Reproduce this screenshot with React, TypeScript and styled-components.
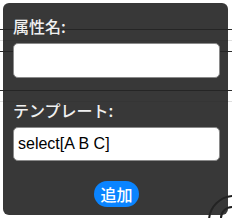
import styled, { createGlobalStyle } from "styled-components";

const GlobalStyle = createGlobalStyle`
  html, body {
    margin: 0;
    padding: 0;
    background: #ffffff;
  }
  * {
    box-sizing: border-box;
  }
`;

const Stage = styled.div`
  position: relative;
  width: 232px;
  height: 218px;
  overflow: hidden;
  background: #ffffff;
`;

const Backdrop = styled.div`
  display: flex;
  flex-direction: column;
`;

const Rule = styled.div<{ $gap: number; $tone: "dark" | "light" }>`
  margin-top: ${(p) => p.$gap}px;
  height: 1px;
  background: ${(p) => (p.$tone === "dark" ? "#2e2e2e" : "#dedede")};
`;

const Handle = styled.svg`
  position: absolute;
  right: 0;
  bottom: 0;
`;

const Panel = styled.div`
  position: absolute;
  left: 3px;
  top: 3px;
  width: 225px;
  height: 212px;
  border-radius: 6px;
  background: rgba(36, 36, 36, 0.91);
  padding: 12px 8px 8px 10px;
  display: flex;
  flex-direction: column;
  font-family: "Noto Sans CJK JP", "Noto Sans", sans-serif;
`;

const Field = styled.div`
  display: flex;
  flex-direction: column;
  gap: 5px;
  & + & {
    margin-top: 21px;
  }
`;

const Label = styled.label`
  color: #f0f0f0;
  font-size: 16px;
  font-weight: 500;
  line-height: 23px;
`;

const Input = styled.input<{ $h: number }>`
  width: 100%;
  height: ${(p) => p.$h}px;
  border: 1px solid #8a8a8a;
  border-radius: 5px;
  background: #ffffff;
  padding: 0 4px;
  font-family: "Liberation Sans", Arial, sans-serif;
  font-size: 16px;
  color: #000000;
  outline: none;
`;

const Actions = styled.div`
  display: flex;
  justify-content: center;
  margin-top: 20px;
`;

const AddButton = styled.button`
  height: 26px;
  padding: 0 6px;
  border: none;
  border-radius: 13px;
  background: #0a84ff;
  color: #ffffff;
  font-family: "Noto Sans CJK JP", sans-serif;
  font-size: 16px;
  font-weight: 500;
  line-height: 26px;
`;

export default function App() {
  return (
    <>
      <GlobalStyle />
      <Stage>
        <Backdrop>
          <Rule $gap={29} $tone="dark" />
          <Rule $gap={10} $tone="light" />
          <Rule $gap={10} $tone="dark" />
          <Rule $gap={38} $tone="dark" />
          <Rule $gap={10} $tone="light" />
        </Backdrop>
        <Handle width="40" height="40" viewBox="0 0 40 40">
          <circle cx="42" cy="43" r="25" fill="none" stroke="#1e1e1e" strokeWidth="2" />
          <circle cx="40" cy="40" r="11" fill="none" stroke="#1e1e1e" strokeWidth="2" />
        </Handle>
        <Panel>
          <Field>
            <Label>属性名:</Label>
            <Input $h={35} defaultValue="" />
          </Field>
          <Field>
            <Label>テンプレート:</Label>
            <Input $h={34} defaultValue="select[A B C]" />
          </Field>
          <Actions>
            <AddButton>追加</AddButton>
          </Actions>
        </Panel>
      </Stage>
    </>
  );
}
